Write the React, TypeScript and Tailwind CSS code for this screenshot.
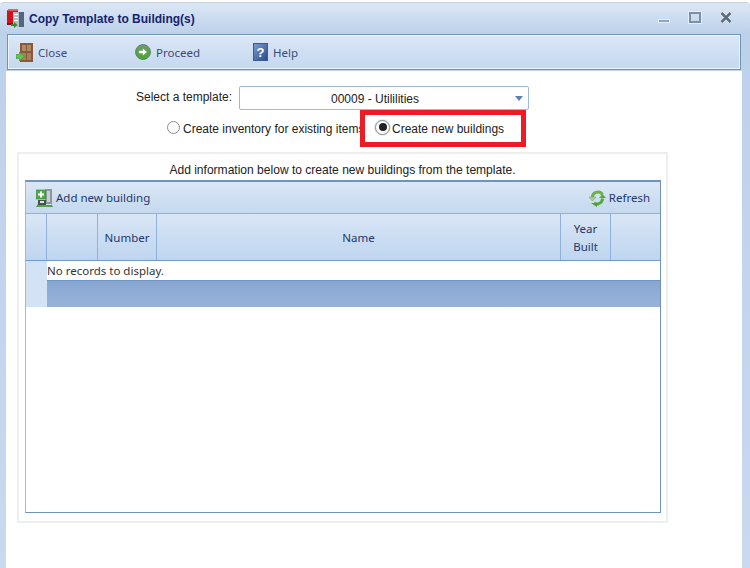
const uiFont = "font-['Noto_Sans',sans-serif] text-[11.5px]";
const headerCell = `flex items-center justify-center border-r border-[#8fb2dc] pt-[2px] leading-[18px] text-[#24386b] text-center ${uiFont}`;

function AppIcon() {
  return (
    <svg width="18" height="19" viewBox="0 0 18 19" className="shrink-0">
      <rect x="0" y="1" width="11" height="14" rx="1" fill="#d3131b" />
      <rect x="1" y="0" width="10" height="2" fill="#f2575b" />
      <rect x="0" y="14" width="6" height="2" fill="#8c0f14" />
      <rect x="6" y="3" width="11" height="15" fill="#b4bfca" />
      <rect x="12" y="3" width="5" height="15" fill="#55677a" />
      <rect x="7" y="5" width="4" height="1" fill="#ffffff" />
      <rect x="7" y="8" width="4" height="1" fill="#ffffff" />
      <rect x="7" y="11" width="4" height="1" fill="#ffffff" />
      <path d="M4 15h3v-2l3.500 3-3.500 3v-2H4z" fill="#2f8f2d" />
    </svg>
  );
}

function DoorIcon() {
  return (
    <svg width="17" height="19" viewBox="0 0 17 19" className="shrink-0">
      <rect x="4" y="0" width="13" height="19" fill="#8a5a36" />
      <rect x="6" y="2" width="4" height="6" fill="#b08a66" />
      <rect x="11" y="2" width="4" height="6" fill="#b08a66" />
      <rect x="6" y="10" width="4" height="7" fill="#a87f58" />
      <rect x="11" y="10" width="4" height="7" fill="#a87f58" />
      <path d="M0 11.500h3.500V9L8.500 13.500 3.500 18v-2.500H0z" fill="#6cc04f" stroke="#3f8f35" strokeWidth="0.6" />
    </svg>
  );
}

function ProceedIcon() {
  return (
    <svg width="16" height="16" viewBox="0 0 16 16" className="shrink-0">
      <defs>
        <linearGradient id="proceedFill" x1="0" y1="0" x2="0" y2="1">
          <stop offset="0" stopColor="#6f9a78" />
          <stop offset="1" stopColor="#4ca52d" />
        </linearGradient>
      </defs>
      <circle cx="8" cy="8" r="7.500" fill="url(#proceedFill)" stroke="#4f7d5a" strokeWidth="0.8" />
      <path d="M4 6.800h3.800V4.500L12 8l-4.200 3.500V9.200H4z" fill="#ffffff" />
    </svg>
  );
}

function HelpIcon() {
  return (
    <svg width="15" height="18" viewBox="0 0 15 18" className="shrink-0">
      <defs>
        <linearGradient id="helpFill" x1="0" y1="0" x2="1" y2="1">
          <stop offset="0" stopColor="#7f9fd2" />
          <stop offset="1" stopColor="#24488c" />
        </linearGradient>
      </defs>
      <rect x="0.500" y="0.500" width="14" height="17" fill="url(#helpFill)" stroke="#3a5a96" />
      <text x="7.500" y="14" textAnchor="middle" fontSize="13" fontWeight="700" fontFamily="Liberation Sans, sans-serif" fill="#ffffff">?</text>
    </svg>
  );
}

function AddBuildingIcon() {
  return (
    <svg width="17" height="18" viewBox="0 0 17 18" className="shrink-0">
      <rect x="9" y="0" width="7" height="15" fill="#8f979e" />
      <rect x="11" y="2" width="3" height="11" fill="#c9ced3" />
      <rect x="0.500" y="1" width="9" height="9" fill="#4fab4a" stroke="#2f8030" strokeWidth="0.6" />
      <path d="M4 2.500h2V4.500h2v2H6v2H4v-2H2v-2h2z" fill="#ffffff" />
      <rect x="2" y="11" width="8" height="5" fill="#45534c" />
      <rect x="4" y="12" width="4" height="2" fill="#dfe6e0" />
      <path d="M0 18l2-3v3zM17 18l-2-3v3z" fill="#3f9a35" />
      <rect x="2" y="16" width="13" height="2" fill="#52a83e" />
    </svg>
  );
}

function RefreshIcon() {
  return (
    <svg width="17" height="18" viewBox="0 0 17 18" className="shrink-0">
      <path d="M3.500 9.500A5.500 5.500 0 0 1 13.500 5.500" fill="none" stroke="#6cb04a" strokeWidth="3" />
      <path d="M13.500 9.500A5.500 5.500 0 0 1 5 14" fill="none" stroke="#52a83a" strokeWidth="3" />
      <path d="M0 8h7l-3.500 4z" fill="#a9cf8c" stroke="#6fa858" strokeWidth="0.5" />
      <path d="M10 9h7l-3.500-4z" fill="#5aa83f" />
      <path d="M2 14h6v4z" fill="#4e9f36" />
    </svg>
  );
}

function ToolButton({ icon, label, width }: { icon: React.ReactNode; label: string; width: string }) {
  return (
    <div className={`flex items-center gap-[5px] ${width}`}>
      {icon}
      <span className={`pt-[2px] text-[#3c4a78] ${uiFont}`}>{label}</span>
    </div>
  );
}

function Radio({ label }: { label: string }) {
  return (
    <div className="flex items-center gap-[3px]">
      <span className="mb-[2px] h-[13px] w-[13px] rounded-full border border-[#8e8e8e] bg-white" />
      <span className="pt-[2px] text-[12px] text-[#222222]">{label}</span>
    </div>
  );
}

export default function App() {
  return (
    <div className="relative h-[568px] w-[750px] overflow-hidden bg-white font-['Liberation_Sans',sans-serif]">
      <div className="flex h-full flex-col pt-[2px]">
        <div className="flex h-[32px] items-center rounded-t-[4px] border-t border-[#c8d0da] bg-gradient-to-b from-[#dbe7f6] to-[#bcd1ea] pl-[7px] pr-[18px]">
          <AppIcon />
          <span className="ml-[4px] text-[12px] font-bold text-[#14246e]">Copy Template to Building(s)</span>
          <div className="ml-auto flex items-start gap-[19px] pb-[2px]">
            <span className="mt-[7px] h-[4px] w-[12px] border border-[#e4edf8] bg-[#8ea4c2]" />
            <span className="h-[11px] w-[12px] border-2 border-[#7d8ea6] outline outline-1 outline-[#e4edf8]" />
            <svg width="12" height="11" viewBox="0 0 12 11">
              <path d="M1.500 1l9 9M10.500 1l-9 9" stroke="#e4edf8" strokeWidth="4" />
              <path d="M1.500 1l9 9M10.500 1l-9 9" stroke="#5f6b7c" strokeWidth="2.500" />
            </svg>
          </div>
        </div>

        <div className="flex min-h-0 flex-1 bg-gradient-to-b from-[#bcd1ea] to-[#c9d9ee] px-[7px]">
          <div className="flex min-w-0 flex-1 flex-col pr-[2px]">
            <div className="flex h-[36px] items-center border border-[#6f94b8] bg-gradient-to-b from-[#dbe7f6] to-[#c4d8ef] pl-[8px] shadow-[inset_0_0_0_1px_#eef4fb]">
              <ToolButton icon={<DoorIcon />} label="Close" width="w-[119px]" />
              <ToolButton icon={<ProceedIcon />} label="Proceed" width="w-[118px]" />
              <ToolButton icon={<HelpIcon />} label="Help" width="w-[70px]" />
            </div>

            <div className="-mx-[1px] mt-[1px] flex flex-1 flex-col bg-white pl-[11px]">
              <div className="mt-[15px] flex h-[24px] items-center pl-[119px]">
                <span className="w-[103px] pb-[2px] text-[12px] text-[#222222]">Select a template:</span>
                <div className="relative flex h-[24px] w-[290px] items-center justify-center rounded-[2px] border border-[#9fb9da] bg-white pr-[18px]">
                  <span className="pt-[1px] text-[12px] text-[#222222]">00009 - Utililities</span>
                  <span className="absolute right-[5px] top-[9px] h-0 w-0 border-x-[4px] border-t-[5px] border-x-transparent border-t-[#5f7fae]" />
                </div>
              </div>

              <div className="relative mt-[9px] flex h-[18px] items-center pl-[150px]">
                <div className="w-[208px] overflow-hidden whitespace-nowrap">
                  <Radio label="Create inventory for existing items" />
                </div>
                <div className="flex items-center gap-[2px]">
                  <span className="mb-[2px] flex h-[15px] w-[15px] items-center justify-center rounded-full border border-[#8e8e8e] bg-white shadow-[0_0_2px_#9fb9da]">
                    <span className="h-[8px] w-[8px] rounded-full bg-[#222222]" />
                  </span>
                  <span className="pt-[2px] text-[12px] text-[#222222]">Create new buildings</span>
                </div>
                {/* red annotation drawn on top of the screenshot */}
                <div className="absolute left-[343px] top-[-9px] h-[37px] w-[166px] border-[5px] border-[#ed1c24]" />
              </div>

              <div className="mt-[15px] flex h-[371px] w-[651px] flex-col border-2 border-[#eeeeee] px-[6px]">
                <p className="h-[26px] pt-[8px] text-center text-[12.06px] leading-[16px] text-[#222222]">
                  Add information below to create new buildings from the template.
                </p>

                <div className="flex h-[333px] w-[636px] flex-col border border-t-2 border-[#6f94b8] border-l-[#9fb9d6]">
                  <div className="flex h-[32px] items-center justify-between border-b border-[#8fb2dc] bg-gradient-to-b from-[#dbe7f6] to-[#c4d8ef] pl-[10px] pr-[10px]">
                    <div className="flex items-center gap-[3px]">
                      <AddBuildingIcon />
                      <span className={`pt-[1px] text-[#24386b] ${uiFont}`}>Add new building</span>
                    </div>
                    <div className="flex items-center gap-[3px]">
                      <RefreshIcon />
                      <span className={`pt-[1px] text-[#24386b] ${uiFont}`}>Refresh</span>
                    </div>
                  </div>

                  <div className="grid h-[47px] grid-cols-[21px_51px_59px_404px_50px_1fr] border-b border-[#6f9bd0] bg-gradient-to-b from-[#d9e6f6] to-[#bfd5ef]">
                    <div className={headerCell} />
                    <div className={headerCell} />
                    <div className={headerCell}>Number</div>
                    <div className={headerCell}>Name</div>
                    <div className={headerCell}>
                      Year
                      <br />
                      Built
                    </div>
                    <div />
                  </div>

                  <div className="flex h-[46px]">
                    <div className="w-[21px] bg-[#d3e2f5]" />
                    <div className="flex-1">
                      <div className={`h-[20px] border-b border-[#6f94c4] leading-[20px] text-[#333333] ${uiFont}`}>
                        No records to display.
                      </div>
                      <div className="h-[26px] bg-gradient-to-b from-[#87a6d0] to-[#98b3d9]" />
                    </div>
                  </div>
                </div>
              </div>
            </div>
          </div>
        </div>
      </div>
    </div>
  );
}
